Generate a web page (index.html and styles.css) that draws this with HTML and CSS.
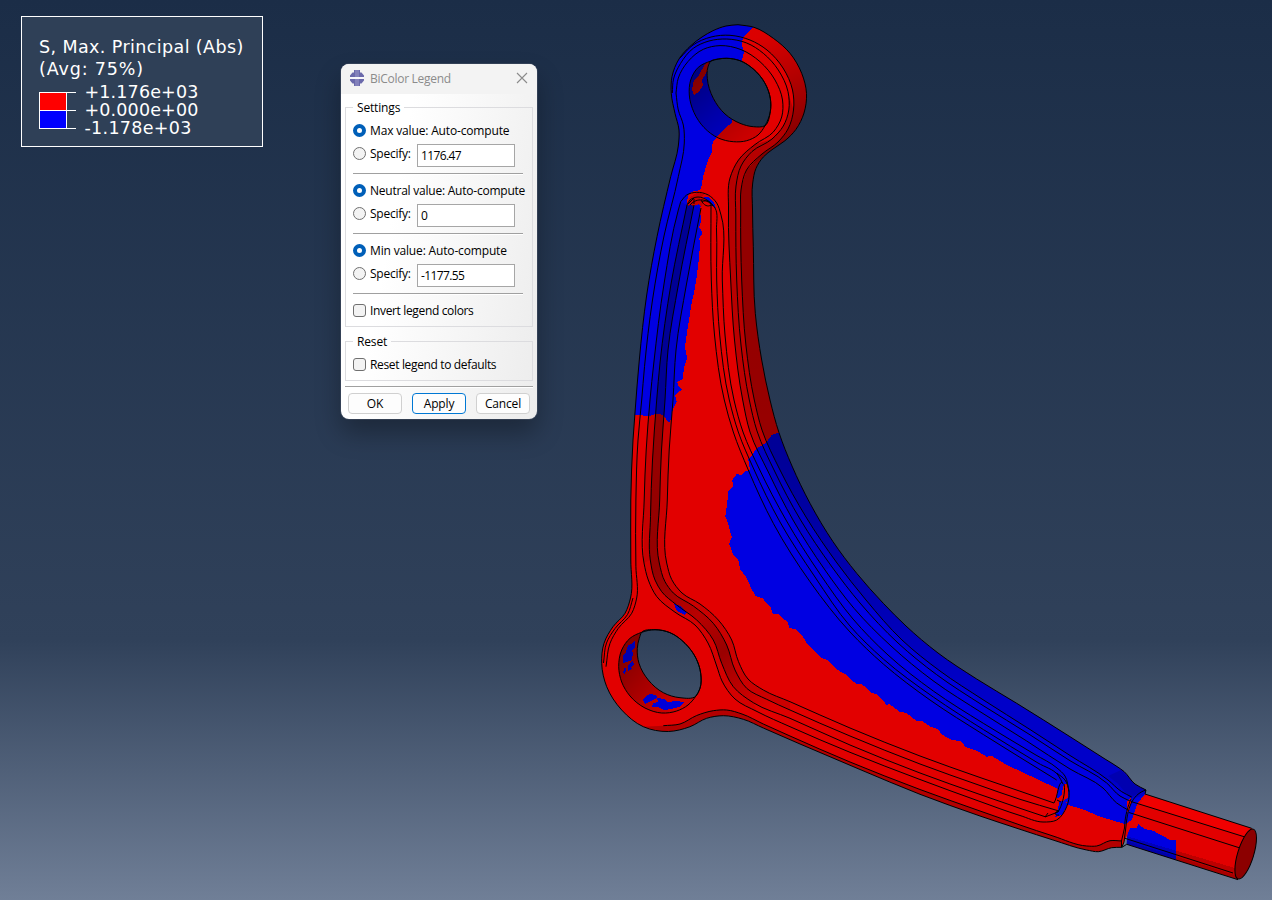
FILE: index.html
```html
<!DOCTYPE html>
<html lang="en">
<head>
<meta charset="utf-8">
<title>BiColor Legend</title>
<link rel="stylesheet" href="styles.css">
</head>
<body>
<main class="viewport">
  <svg class="model" id="model" width="1272" height="900" viewBox="0 0 1272 900" aria-label="Control arm stress contour"></svg>

  <section class="contour">
    <div class="contour-title"><span class="t1">S, Max. Principal (Abs)</span></div>
    <div class="contour-title"><span class="t2">(Avg: 75%)</span></div>
    <div class="contour-scale">
      <svg class="swatches" width="38" height="38" viewBox="0 0 38 38" shape-rendering="crispEdges">
        <rect x="0" y="0" width="28" height="37" fill="#fff"/>
        <rect x="1" y="1" width="26" height="17" fill="#f00"/>
        <rect x="1" y="19" width="26" height="17" fill="#00f"/>
        <path d="M28 .5H37M28 18.5H37M28 36.5H37" stroke="#fff"/>
      </svg>
      <div class="values"><span>+1.176e+03</span><span>+0.000e+00</span><span class="neg">-1.178e+03</span></div>
    </div>
  </section>

  <section class="dialog">
    <header class="titlebar">
      <svg class="logo" width="16" height="16" viewBox="0 0 16 16">
        <path d="M5 0h6v2.500h1.500L15 5.500V7H1V5.500L3.500 2.500H5z" fill="#6a69ab"/>
        <path d="M1 9h14v1.500L12.500 13.500H11V16H5v-2.500H3.500L1 10.500z" fill="#6a69ab"/>
        <path d="M6.500 0h1v7h-1zM8.500 0h1v7h-1zM6.500 9h1v7h-1zM8.500 9h1v7h-1z" fill="#9c9bcb"/>
        <path d="M1 7h14v2H1z" fill="#f6f6fb"/>
      </svg>
      <span class="caption">BiColor Legend</span>
      <svg class="close" width="12" height="12" viewBox="0 0 12 12"><path d="M1 1l10 10M11 1L1 11" stroke="#8b8b8b" stroke-width="1.1" fill="none"/></svg>
    </header>
    <div class="body">
      <fieldset class="group">
        <legend>Settings</legend>
        <div class="row"><i class="radio on"></i><span>Max value: Auto-compute</span></div>
        <div class="row spec"><i class="radio"></i><span class="lbl">Specify:</span><span class="field">1176.47</span></div>
        <hr>
        <div class="row"><i class="radio on"></i><span class="snug">Neutral value: Auto-compute</span></div>
        <div class="row spec"><i class="radio"></i><span class="lbl">Specify:</span><span class="field">0</span></div>
        <hr>
        <div class="row"><i class="radio on"></i><span>Min value: Auto-compute</span></div>
        <div class="row spec"><i class="radio"></i><span class="lbl">Specify:</span><span class="field">-1177.55</span></div>
        <hr>
        <div class="row"><i class="check"></i><span class="tight">Invert legend colors</span></div>
      </fieldset>
      <fieldset class="group second">
        <legend>Reset</legend>
        <div class="row"><i class="check"></i><span class="tight">Reset legend to defaults</span></div>
      </fieldset>
      <hr class="wide">
      <div class="buttons"><button>OK</button><button class="primary">Apply</button><button>Cancel</button></div>
    </div>
  </section>
</main>
<script src="model.js"></script>
</body>
</html>
```
FILE: styles.css
```css
body { margin: 0; }
.viewport {
  position: relative;
  width: 1272px;
  height: 900px;
  overflow: hidden;
  background: linear-gradient(#1b2d47 0, #30415a 640px, #707f97 900px);
}
.model { position: absolute; left: 0; top: 0; }

.contour {
  position: absolute;
  left: 21px;
  top: 16px;
  box-sizing: border-box;
  width: 242px;
  height: 131px;
  padding: 19px 0 0 17px;
  border: 1px solid #fff;
  background: #2f4057;
  color: #fff;
  font: 17.5px/22px "DejaVu Sans", Verdana, sans-serif;
  white-space: nowrap;
}
.contour-title { height: 22px; }
.t1 { letter-spacing: .4px; }
.t2 { letter-spacing: .85px; }
.contour-scale { display: flex; margin-top: 12px; }
.swatches { flex: none; }
.values { display: flex; flex-direction: column; margin: -9px 0 0 7.5px; line-height: 18px; letter-spacing: .15px; }
.values .neg { letter-spacing: .3px; }

.dialog {
  position: absolute;
  left: 341px;
  top: 64px;
  width: 196px;
  height: 355px;
  border-radius: 8px;
  overflow: hidden;
  background: linear-gradient(100deg, #fff 30%, #ececec);
  box-shadow: 0 0 0 1px rgba(70, 80, 100, .55), 0 14px 26px rgba(0, 0, 0, .3);
  color: #000;
  font: 12px/16px "Open Sans", "Noto Sans", sans-serif;
  letter-spacing: -.16px;
  white-space: nowrap;
}
.titlebar {
  display: flex;
  align-items: center;
  box-sizing: border-box;
  height: 30px;
  padding: 0 9px 2px 8px;
  background: #f3f3f3;
  color: #8b8b8b;
}
.caption { flex: 1; margin-left: 5px; padding-top: 2px; letter-spacing: -.28px; }
.body { padding: 5px 4px 0; }
.group {
  margin: 0;
  padding: 8px 9px 7px 7px;
  border: 1px solid #dcdcdf;
  min-width: 0;
}
.second { margin-top: 6px; }
legend { height: 16px; margin-left: 0; padding: 0 4px; line-height: 18px; }
.row { display: flex; align-items: center; height: 16px; }
.radio, .check {
  flex: none;
  box-sizing: border-box;
  width: 13px;
  height: 13px;
  margin: 0 4px 1px 0;
  border: 1px solid #707070;
  background: #f3f3f3;
}
.radio { border-radius: 50%; }
.radio.on { border: 4px solid #005fb8; background: #fff; }
.check { border-radius: 3px; }
.spec { height: 23px; margin-top: 5px; }
.spec .radio { margin-bottom: 4px; }
.lbl { width: 47px; margin-bottom: 3px; letter-spacing: -.25px; }
.snug { letter-spacing: -.23px; }
.tight { letter-spacing: -.35px; }
.field {
  box-sizing: border-box;
  width: 98px;
  height: 23px;
  padding-left: 3px;
  border: 1px solid #a6a6a6;
  background: #fff;
  line-height: 22px;
  letter-spacing: -.6px;
}
hr {
  height: 1px;
  margin: 6px 0 8px;
  border: 0;
  border-top: 1px solid #a0a0a0;
  background: #fff;
}
hr.wide { margin: 5px 0; }
.buttons { display: flex; gap: 10px; padding-left: 3px; }
button {
  box-sizing: border-box;
  width: 54px;
  height: 21px;
  padding: 0;
  border: 1px solid #d0d0d0;
  border-radius: 4px;
  background: #fdfdfd;
  color: #000;
  font: inherit;
  letter-spacing: inherit;
  line-height: 19px;
}
.primary { border-color: #0078d4; }
```
FILE: model.js
```js
// Control arm, in viewport pixels. Curves are chordal Catmull-Rom splines through point lists.
const pts = s => s.trim().split(/\s+/).map(p => p.split(',').map(Number));
const spline = (p, closed) => {
  const n = p.length;
  const at = i => closed ? p[(i + n) % n] : p[Math.max(0, Math.min(n - 1, i))];
  const dist = (a, b) => Math.hypot(b[0] - a[0], b[1] - a[1]);
  const tangent = i => {
    const [a, b, c] = [at(i - 1), at(i), at(i + 1)];
    const s = dist(a, b), t = dist(b, c);
    return [0, 1].map(k => s === 0 ? (c[k] - b[k]) / t : t === 0 ? (b[k] - a[k]) / s
      : ((c[k] - b[k]) / t * s + (b[k] - a[k]) / s * t) / (s + t));
  };
  let d = `M${p[0]}`;
  for (let i = 0; i < (closed ? n : n - 1); i++) {
    const b = at(i), c = at(i + 1), t = dist(b, c) / 3;
    const m = tangent(i), q = tangent(i + 1);
    d += `C${b[0] + m[0] * t},${b[1] + m[1] * t} ${c[0] - q[0] * t},${c[1] - q[1] * t} ${c}`;
  }
  return d + (closed ? 'Z' : '');
};
const poly = s => `M${s.trim().replace(/\s+/g, 'L')}Z`;

const outerRight = pts('738,24.700 754,27.3 773.3,38.3 790,53.3 801.7,73.3 806.5,93.3 804,113 796,129.3 785,140.7 773,149 763.3,157 756,168.3 752.7,183 752.5,210 753.3,246.7 755.3,313.3 761.7,360 770,400 779,432.7 792,466 810,503.3 833,541.7 856.7,573.3 883.3,603.3 906,626 938,653 976.7,679 1016.7,703.3 1070,736.7 1105,759 1117,766.5 1124,771.500 1135,784 1146,790');
const outerBottom = pts('1122,847.3 1111.7,847.7 1098.3,851.7 1086.7,850 1053,840 1020,829.3 980,816 920,794.3 860,769.500 800,744 763.3,728 743.3,719.3 723.3,715.7 706.7,718.3 690,726.7 668.3,731.500 643.3,726.7 621.7,710 606.7,686.7 601.7,663.3 604,643.3 613,626.7 625,613.3 630.5,598 630.8,560 630.8,500 633,440 635.2,410 639.3,360 646.7,295 657,236.7 670.7,176.7 678.3,146 679,130 675,113.3 671.3,93.3 672,76.7 679,59 691,45.5 702,37 713,30.7 726,26 738,24.700');
const topHole = pts('711,61 718.3,59 726.7,58.3 740,60.7 753.3,69 765,83.3 770.3,98.3 770.3,111.7 765,125.7 753.3,126.7 740,123.3 725,114 713.3,98.3 707.3,78.3 707.7,68');
const topRim = pts('711,61 718.3,59 726.7,58.3 740,60.7 753.3,69 765,83.3 770.3,98.3 770.3,111.7 765,125.7 758,135 746.7,140.7 733.3,141.7 718.3,138 704,127.5 694,112.5 689.3,95 690.7,80 698.3,67.3');
const lowHole = pts('641.7,632.3 655,629.7 670,632.7 685,643.3 696,658.3 700.7,673.3 700,688.3 695.7,696.3 680,697.7 663.3,692.7 648.3,680 639,663.3 637.3,648.3 639.3,638.3');
const lowRim = pts('641.7,632.3 655,629.7 670,632.7 685,643.3 696,658.3 700.7,673.3 700,688.3 695.7,696.3 688,705 676.7,711 661.7,713 645,708 630,696 621.7,682 618.7,666.7 621.7,650 630,638.3');

// Pocket and flange edges, outermost to innermost on the left side.
const E = {
  a: pts('676,93 678.3,110 683.3,125 684.3,143 678.3,176.7 664,236 652.5,300 644.5,366.7 641.7,400 638,440 635.9,500 635.9,566.7 636.7,598 631.7,613.3 618.3,628.3 610,643.3 606,666.7'),
  a2: pts('633,598 627.5,614.5 615,628.5 606.5,643 603.5,663'),
  b: pts('680.7,201.7 678.3,210 664,284 653.8,363 650,400 646.2,450 644.2,500 644,563 648.3,580 656.7,596.500 675,612.2 695,625 708,643 716.7,666 722,681 735,699 757,711.5 790,726.7 850,752.3 920,779.5 980,801.5 1020,815.5 1043,822 1056.7,820 1066.7,806.7 1069,791.7 1065,780 1056.7,773'),
  c: pts('687,205 671,284 660,363 656.7,400 652.5,460 650.5,516.7 650.3,560 655,580 661.7,591.7 676.7,605 696.7,620 713.3,640 721.7,663.3 733.3,686.7 753.3,702.7 790,718.3 850,745 920,773 980,794.5 1020,808.3 1045,816.7'),
  d: pts('694,205 678.500,284 668,350 665,400 661.5,450 659.7,500 659.3,563 665,581.7 673.3,593 693.3,606 713.3,623.3 726.7,645 735,670 746.7,688.3 766.7,699.3 790,710 850,736 920,764 980,785.5 1020,799.3 1059,811'),
  e: pts('701,208 686.500,284 676,350 673,400 669.2,450 667.3,500 666.7,563 671.7,579.5 682,593 700,604 718.3,620 731.7,640 738.5,661.7 748,679 763.3,690 790,701.7 850,728 920,756 980,777.5 1020,791.2 1054,803'),
  f: pts('711,205 711.3,280 714.5,335 724.3,400 733.3,432 748.3,470 773.3,523.3 810,581.7 850,632 883.3,664 930,700 983.3,734.5 1056.7,780'),
  g: pts('687,205 690,200 698,197 708,200.7 715,208 716.5,230 716.7,280 719.7,335 729.3,400 738.3,432 753.3,468 780,522 815,577 850,626 883.3,659 933.3,697 983.3,729.5 1038,763 1058,775 1063,784'),
  h: pts('680.7,201.7 686.7,195 696.7,192.3 708.3,195 716.7,203 721,215 722.3,280 725,335 734,400 743,432 759.3,469 786,520 820,574 853,619 888,655 933.3,691 983.3,723.3 1035,754.500 1057,768 1065,776 1069,791.7'),
  i: pts('676,93 678.3,78 688,61.5 703.3,49.3 720,45.6 741,49.6 760,61.7 775,80 782.5,100 781.7,117 773.3,132 755,144.5 738.500,160 730,178 728.5,210 730.7,280 734.500,340 742.7,400 750,432 768.3,472 793,520 825,570 854,608.3 891,646 933,680.7 983,713.5 1026.7,741 1070,769 1103,788 1116.7,803 1128,810'),
  j: pts('672.3,93 673.500,79 680.500,63.5 693.3,48.3 709,41 726.7,39 746.7,43 763.3,53.3 778.3,70 788,91.7 788.8,110 783.3,126 772,139 752,151.5 741,166 736,186 735.8,215 736.7,280 741,345 749.3,400 757,431 775,472 800,519 832,567 860,603 898,643 936.7,674.7 983,705.500 1030,734.8 1070,760.7 1106.7,783 1120,796 1130,801'),
  k: pts('680,58 693,45 711,37 730,35.3 750,40 767,50 783,68 792.5,90 793.5,110 788,129 778,142 762,154 746.500,170 741,190 740.7,210 741.7,280 745.9,345 754.3,400 762,430 780,470 806,517 837,563 866,600 902,640 940,671 983,699.7 1030,729.5 1070,755.5 1108,780 1121.7,791.7 1131.7,797'),
  l: pts('663.3,725.7 680,724 696.7,715.5 713.3,710.7 726.7,710 742,714 763.3,724 790,736 850,762 920,789.5 980,811 1020,825 1053,836 1086.7,846 1096.7,846 1110,840.7 1122,841')
};

const armPath = spline(outerRight) + 'L1145,794 ' + spline(outerBottom).replace('M', 'L') + 'Z';
const shaftPath = 'M1145,794L1251.7,828.3L1256,840L1238,879.5L1126.7,844.3L1128,820Z';
const join = (p, q) => spline(p) + spline(q).replace('M', 'L') + 'Z';
const strip = (a, b, i0, i1, j0, j1) => join(a.slice(i0, i1), b.slice(j0, j1).reverse());
// Part of a line between two y values, past its first `skip` points.
const between = (p, y0, y1, skip) => p.filter((q, i) => i >= skip && q[1] >= y0 && q[1] <= y1);
const fill = (d, f, extra = '') => `<path d="${d}" fill="${f}" ${extra}/>`;
const dark = (d, o) => fill(d, '#000', `fill-opacity="${o}"`);
const RED = '#e20000', BLUE = '#0000e2';

const blueTop = poly('754,24 754,27 749,31 744,36 742,42 742.5,47 744,52 742,60 734,90 731.7,123 726,127 722,131.7 716,138 712.7,142 711.7,153 709,158 707,163 705,170 703,177 702,184 700.7,189 697,191 691.7,191.7 688,196 686.7,205 693,204 701,202 700,213 701.5,220 699,227 702.7,233 699.3,238 700,245 698.5,262 696.7,277 694.5,290 691.7,303 688,326 685,346.7 687,358 684,368 682.7,379 677.3,382 679,387 682,389.3 675,395 676.7,402 672.7,410 671.5,418 669,422.7 666,419 662.7,415 659,413.5 655,414.3 650,416 636,415 600,415 600,10 754,10');
const blueArm = poly('779,432.7 771.7,435 766,443 756.7,448.3 752,455 748.3,459.3 750,470 746,471 741.7,475 736.7,474 732.3,480 733,487 728.3,491.7 727.5,500 726.7,507 725.3,516 728,523 731.7,537 729.3,544 733.3,555 738.3,560 740,569 746.7,578 752,590 755.7,596 762.7,598.5 771,608 772.7,614 778.3,614 788,622.7 789.3,628 795,629 803,637 808,645 813,650 820,657 829,661 836,669 845,674 850,679 856.7,684 861.7,684 871.7,692.7 878,695 886.7,705 889,704 894,707.5 900,712 906,712.7 916.7,721 923,721.5 930,726.5 938,729.3 941.7,734.3 950,739.3 961.7,741.7 965,746.7 976.7,750.7 986.7,756.7 991.7,756 1006.7,765 1022,772 1040,780.5 1055,787.5 1062,792 1068,805 1083,809.3 1100,816.7 1125,824 1132,820 1136.7,805 1143,796 1160,790 1100,700 900,550 790,430');
const blueShaft = poly('1124,822 1126,827.3 1136.7,828.3 1138,824 1145,829 1153,830.7 1163,836 1170,840 1175.7,840 1175.7,862 1124,846');

const edges = Object.values(E).map(p => `<path d="${spline(p)}"/>`).join('');

document.getElementById('model').innerHTML = `
<defs>
  <clipPath id="arm"><path clip-rule="evenodd" d="${armPath}${spline(topHole, true)}${spline(lowHole, true)}"/></clipPath>
  <clipPath id="shaft"><path d="${shaftPath}"/></clipPath>
  <clipPath id="topWall"><path d="${spline(topRim, true)}"/></clipPath>
  <linearGradient id="side" gradientUnits="userSpaceOnUse" x1="0" y1="150" x2="0" y2="760">
    <stop offset="0" stop-opacity=".36"/><stop offset=".5" stop-opacity=".33"/><stop offset=".75" stop-opacity=".2"/><stop offset=".9" stop-opacity=".11"/></linearGradient>
  <linearGradient id="ring" gradientUnits="userSpaceOnUse" x1="750" y1="40" x2="795" y2="140">
    <stop offset="0" stop-opacity=".03"/><stop offset=".45" stop-opacity=".2"/><stop offset="1" stop-opacity=".42"/></linearGradient>
  <linearGradient id="bevel" gradientUnits="userSpaceOnUse" x1="0" y1="140" x2="0" y2="760">
    <stop offset="0" stop-opacity=".2"/><stop offset=".5" stop-opacity=".16"/><stop offset=".75" stop-opacity=".06"/><stop offset="1" stop-opacity="0"/></linearGradient>
  <linearGradient id="groove" gradientUnits="userSpaceOnUse" x1="655" y1="570" x2="765" y2="710">
    <stop offset="0" stop-opacity=".34"/><stop offset=".35" stop-opacity=".18"/><stop offset=".6" stop-opacity=".32"/><stop offset="1" stop-opacity=".02"/></linearGradient>
  <linearGradient id="wall" gradientUnits="userSpaceOnUse" x1="695" y1="80" x2="745" y2="140">
    <stop offset="0" stop-opacity=".42"/><stop offset=".5" stop-opacity=".25"/><stop offset="1" stop-opacity=".1"/></linearGradient>
  <linearGradient id="wall2" gradientUnits="userSpaceOnUse" x1="622" y1="655" x2="680" y2="708">
    <stop offset="0" stop-opacity=".42"/><stop offset=".5" stop-opacity=".25"/><stop offset="1" stop-opacity=".06"/></linearGradient>
</defs>
<g clip-path="url(#shaft)" shape-rendering="crispEdges">
  ${fill(shaftPath, RED)}
  ${fill(poly('1146,795 1250,828 1247,838 1140,804'), '#f00000')}
  ${fill(blueShaft, BLUE)}
  ${fill(poly('1125,790 1147,790 1142,797 1137,806 1132,820 1130,828 1124,826'), BLUE)}
  ${dark(poly('1126,836 1235,868 1239,882 1126,848'), .16)}
  ${dark(poly('1126,841 1235,875 1239,882 1126,848'), .1)}
</g>
<g clip-path="url(#arm)">
  <g shape-rendering="crispEdges">
  ${fill(armPath, RED)}
  ${fill(blueTop, BLUE)}
  ${fill(blueArm, BLUE)}
  ${fill(poly('687,203 690,197 697,193 704,194 700,199 703,203 701,207 699,204 693,206 690,204 688,206'), '#c40000')}
  ${fill(poly('703,197 708,197 714,203 716,208 712,206 708,201'), BLUE)}
  ${fill(poly('674,604 680,606 687,612 685,615 677,611'), BLUE)}
  ${fill(poly('1058,783 1063,781 1065,790 1060,797 1057,798'), BLUE)}
  ${fill(poly('1064,784 1068,784 1068,798 1063,800 1061,797'), RED)}
  ${fill(poly('1059,802 1066,800 1067,806 1062,815 1055,817 1058,810'), BLUE)}
  ${fill(poly('1127,801 1131,798 1130,810 1127,812'), RED)}
  </g>
  ${dark(strip(E.b, E.c, 0, 8, 0, 7), .12)}
  ${fill(strip(E.c, E.d, 0, 16, 0, 16), 'url(#groove)')}
  ${dark(strip(E.d, E.e, 0, 8, 0, 8), .1)}
  ${dark(strip(E.b, E.c, 7, 17, 6, 15), .06)}
  ${dark(strip(E.d, E.e, 7, 16, 7, 16), .1)}
  ${fill(strip(E.j, E.k, 9, 33, 8, 33), 'url(#bevel)')}
  ${fill(join(between(E.i, 135, 570, 10), between(E.j, 135, 570, 10).reverse()), 'url(#bevel)')}
  ${fill(join(E.k.slice(12), outerRight.slice(10).reverse()), 'url(#side)')}
  ${fill(join(E.k.slice(0, 13), outerRight.slice(0, 11).reverse()), 'url(#ring)')}
  ${dark(poly('1121,770 1135,784 1146,790 1143,796 1131,799 1118,784 1108,776'), .12)}
  ${dark(join(E.l, outerBottom.slice(0, 17)), .2)}
  <g clip-path="url(#topWall)">
    ${fill(poly('710,59 704,66 699,75 694,80 692,89 694,95 699,92 703,85 702,80 708,70'), '#e20000', 'shape-rendering="crispEdges"')}
    ${fill(poly('680,50 780,50 780,150 680,150'), 'url(#wall)')}
  </g>
  ${fill(spline(lowRim, true), 'url(#wall2)')}
  <g fill="#0000b4" shape-rendering="crispEdges">
    <path d="${poly('635,640 632,644 628,645 626,652 623,656 623,663 632,660 633,653 631,651 635,647')}"/>
    <path d="${poly('633,661 628,665 628,671 632,669 631,667 634,664')}"/>
    <path d="${poly('625,667 623,673 625,675 626,669')}"/>
    <path fill="#0000d0" d="${poly('643,700 646,696 650,694 655,695 658,697 655,699 651,701 649,702 645,704')}"/>
    <path fill="#0000d8" d="${poly('657,698 664,699 668,702 676,701 684,702 679,707 671,709 664,710 658,707 652,707 653,703 658,702')}"/>
  </g>
</g>
<g fill="none" stroke="#000" stroke-width="1">
  <g>${edges}</g>
  <path d="${spline(outerRight)}M1146,790L1145,794L1251.7,828.3M1238,879.7L1126.7,844.3L1122,847.3"/>
  <path d="${spline(outerBottom)}"/>
  <path d="${spline(topRim, true)}${spline(topHole, true)}${spline(lowRim, true)}${spline(lowHole, true)}"/>
  <path d="M1131,801.5L1244,836.7M1129,812.5L1239,847.7M1125,838.3L1233,873"/>
  <path d="M1146,790C1134,794 1128,804 1126,826L1124,842L1122,847M1131,799C1128,806 1125,815 1124.500,828L1121.500,841V847"/>
  <path d="M1062,782C1058,783 1058,796 1054,803M1064,784C1066,792 1062,806 1058,812L1045,817M1045,817L1048,813M1059,811C1053,812 1055,816 1059,815M1057,800L1061,802"/>
  <path d="M688,204L694,198M694,199V204M701,200C704,206 708,207 711,205M702,202C706,199 712,202 711,206M690,205C695,199 705,197 713,206"/>
  <ellipse cx="1245.700" cy="854" rx="8" ry="26" transform="rotate(17 1245.700 854)" fill="#8c0000"/>
</g>`;
```
